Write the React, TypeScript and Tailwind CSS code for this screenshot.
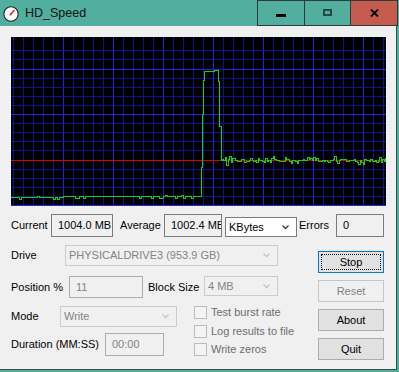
import React from 'react';

const CW = 375;
const CH = 169;

// deterministic noise so the trace looks the same on each render
let seed = 11;
const rnd = () => {
  seed = (seed * 9301 + 49297) % 233280;
  return seed / 233280;
};

const buildTrace = () => {
  let d = 'M0 160.5';
  for (let x = 2; x <= 190; x += 2) {
    const base = x < 52 ? 160.5 : 159.5;
    const r = rnd();
    const y = r < 0.12 ? base + 1.5 : r > 0.94 ? base - 1 : base;
    d += ` H${x} V${y}`;
  }
  d += ' H190.5 V130.5 H191.5 V77 H192.5 V43 H193.5 V34';
  for (let x = 195; x <= 206; x += 2) {
    d += ` H${x} V${rnd() < 0.5 ? 33.5 : 34.5}`;
  }
  d += ' H207.5 V44.5 H208.5 V89.5 H210 V123.5';
  for (let x = 211; x <= CW; x += 1.5) {
    const r = rnd();
    let dy = Math.round((rnd() + rnd() - 1) * 3);
    if (r > 0.9) dy += rnd() < 0.5 ? -3 : 3;
    d += ` H${x} V${123.5 + dy}`;
  }
  return d;
};

const trace = buildTrace();

const Chart = () => {
  const vLines = [];
  for (let k = 0; k * 10 + 2.5 < CW; k++) vLines.push(k);
  const hLines = [];
  for (let k = 0; k <= 17; k++) hLines.push(k);
  return (
    <svg width={CW} height={CH} className="block bg-black" shapeRendering="crispEdges">
      {vLines.map((k) => (
        <line
          key={'v' + k}
          x1={k * 10 + 2.5}
          x2={k * 10 + 2.5}
          y1={0}
          y2={CH}
          stroke={k > 0 && k % 5 === 0 ? '#2222e6' : '#101092'}
          strokeWidth={1}
        />
      ))}
      {hLines.map((k) => {
        const y = 168.5 - k * 9.1;
        return (
          <line
            key={'h' + k}
            x1={0}
            x2={CW}
            y1={y}
            y2={y}
            stroke={k % 5 === 0 ? '#2222e6' : '#101092'}
            strokeWidth={1}
          />
        );
      })}
      <line x1={0} x2={CW} y1={123.5} y2={123.5} stroke="#dd0000" strokeWidth={1} />
      <path d={trace} fill="none" stroke="#18d018" strokeWidth={1} />
    </svg>
  );
};

const Chevron = ({ color }: { color: string }) => (
  <svg width="7" height="5" viewBox="0 0 7 5" className="block">
    <polyline points="0.5,0.5 3.5,3.5 6.5,0.5" fill="none" stroke={color} strokeWidth="1.3" />
  </svg>
);

const Combo = ({ text, disabled, className }: { text: string; disabled?: boolean; className: string }) => (
  <div
    className={
      'flex items-center justify-between pl-[3px] pr-[7px] border ' +
      (disabled ? 'border-[#cccccc] bg-[#f0f0f0] text-[#838383] ' : 'border-[#7a7a7a] bg-white text-black ') +
      className
    }
  >
    <span className="whitespace-nowrap">{text}</span>
    <Chevron color={disabled ? '#c4c4c4' : '#3a3a3a'} />
  </div>
);

const Box = ({ text, className }: { text: string; className: string }) => (
  <div className={'flex items-center pl-[6px] border whitespace-nowrap overflow-hidden bg-[#f0f0f0] ' + className}>
    {text}
  </div>
);

const Check = ({ label, className }: { label: string; className: string }) => (
  <div className={'flex items-center h-[13px] ' + className}>
    <div className="w-[13px] h-[13px] border border-[#bcbcbc] bg-[#f4f4f4]" />
    <span className="ml-[4px] text-[#6d6d6d] whitespace-nowrap">{label}</span>
  </div>
);

const Button = ({ label, className }: { label: string; className: string }) => (
  <div className={'w-[66px] h-[22px] flex items-center justify-center border ' + className}>{label}</div>
);

export default function App() {
  return (
    <div className="w-[399px] h-[372px] bg-[#52ae9f] flex flex-col font-['Liberation_Sans',Arial,sans-serif] text-[11px] text-black leading-none overflow-hidden">
      {/* title bar */}
      <div className="h-[26px] flex">
        <div className="flex items-center pl-[3px]">
          <svg width="16" height="16" viewBox="0 0 16 16" className="block mt-[1px]">
            <circle cx="8" cy="8" r="7.2" fill="#ffffff" stroke="#222222" strokeWidth="1.1" />
            <line x1="7.5" y1="8.5" x2="11.5" y2="4" stroke="#e02020" strokeWidth="1.4" />
            <circle cx="7.5" cy="8.5" r="1" fill="#e02020" />
          </svg>
          <span className="ml-[6px] text-[12.5px] text-[#111]">HD_Speed</span>
        </div>
        <div className="ml-auto mr-[1px] flex">
          <div className="w-[48px] h-[26px] border border-[#2c3c3a] flex items-center justify-center">
            <svg width="10" height="3" viewBox="0 0 10 3" className="block mt-[5px]" shapeRendering="crispEdges">
              <rect x="0" y="0" width="10" height="3" fill="#000" />
            </svg>
          </div>
          <div className="w-[46px] h-[26px] border-y border-r border-[#2c3c3a] flex items-center justify-center">
            <div className="w-[9px] h-[7px] border-2 border-[#234a44] -mt-[1px]" />
          </div>
          <div className="w-[47px] h-[26px] border-y border-r border-[#2c3c3a] bg-[#c65b4f] flex items-center justify-center">
            <svg width="9" height="8" viewBox="0 0 9 8" className="block -mt-[1px]">
              <path d="M1 0.5 L8 7.5 M8 0.5 L1 7.5" stroke="#000" strokeWidth="1.8" />
            </svg>
          </div>
        </div>
      </div>

      {/* client area */}
      <div className="w-[397px] h-[344px] bg-[#f0f0f0] border-r border-b border-[#3a4846] pl-[11px] pt-[11px] flex flex-col">
        <Chart />

        <div className="mt-[8px] h-[23px] flex items-end">
          <span className="w-[40px] self-center">Current</span>
          <Box text="1004.0 MB" className="w-[62px] h-[23px] border-[#7a7a7a]" />
          <span className="ml-[7px] w-[44px] self-center">Average</span>
          <Box text="1002.4 MB" className="w-[58px] h-[23px] border-[#7a7a7a]" />
          <Combo text="KBytes" className="ml-[3px] w-[72px] h-[20px]" />
          <span className="ml-[2px] w-[37px] self-center">Errors</span>
          <Box text="0" className="w-[48px] h-[23px] border-[#7a7a7a]" />
        </div>

        <div className="mt-[8px] flex">
          <div className="w-[307px] flex flex-col">
            <div className="h-[21px] flex items-center">
              <span className="w-[54px]">Drive</span>
              <Combo text="PHYSICALDRIVE3 (953.9 GB)" disabled className="w-[213px] h-[21px]" />
            </div>
            <div className="mt-[10px] h-[22px] flex items-start">
              <span className="w-[58px] self-center whitespace-nowrap">Position %</span>
              <Box text="11" className="w-[74px] h-[22px] border-[#adadad] text-[#838383]" />
              <span className="ml-[5px] w-[56px] self-center whitespace-nowrap">Block Size</span>
              <Combo text="4 MB" disabled className="w-[74px] h-[20px]" />
            </div>
            <div className="mt-[8px] flex">
              <div className="w-[183px] flex flex-col">
                <div className="h-[21px] flex items-center">
                  <span className="w-[49px]">Mode</span>
                  <Combo text="Write" disabled className="w-[117px] h-[21px]" />
                </div>
                <div className="mt-[6px] h-[23px] flex items-center">
                  <span className="w-[94px] whitespace-nowrap">Duration (MM:SS)</span>
                  <Box text="00:00" className="w-[59px] h-[23px] border-[#adadad] text-[#838383]" />
                </div>
              </div>
              <div className="flex flex-col">
                <Check label="Test burst rate" className="" />
                <Check label="Log results to file" className="mt-[6px]" />
                <Check label="Write zeros" className="mt-[5px]" />
              </div>
            </div>
          </div>

          <div className="pt-[6px] flex flex-col gap-[7px]">
            <div className="w-[66px] h-[22px] border border-[#0078d7] bg-[#e1e1e1] p-[2px]">
              <div className="w-full h-full border border-dotted border-black flex items-center justify-center">
                Stop
              </div>
            </div>
            <Button label="Reset" className="bg-[#f0f0f0] border-[#c6c6c6] text-[#838383]" />
            <Button label="About" className="bg-[#e1e1e1] border-[#adadad]" />
            <Button label="Quit" className="bg-[#e1e1e1] border-[#adadad]" />
          </div>
        </div>
      </div>
    </div>
  );
}
